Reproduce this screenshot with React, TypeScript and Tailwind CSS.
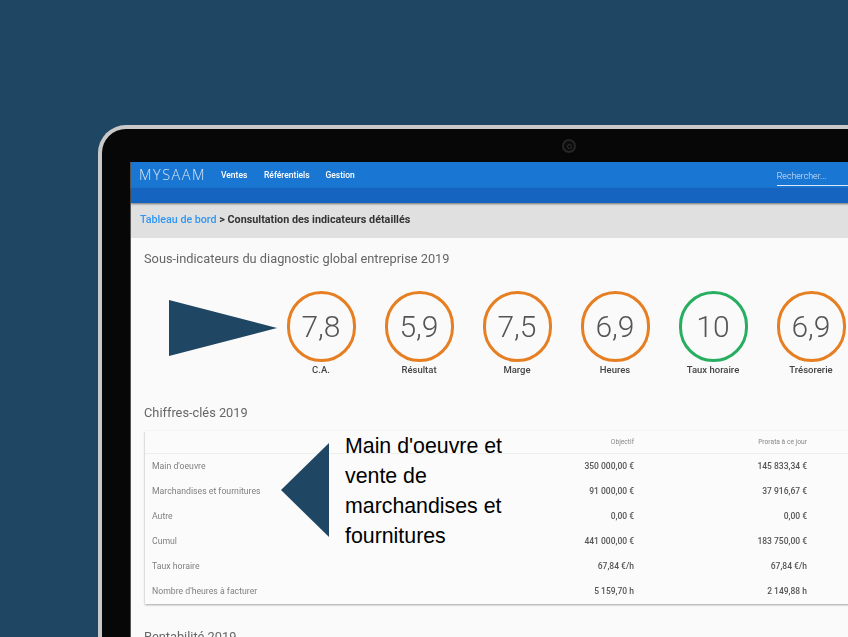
const gauges = [
  { v: "7,8", l: "C.A.", c: "#e67e22" },
  { v: "5,9", l: "Résultat", c: "#e67e22" },
  { v: "7,5", l: "Marge", c: "#e67e22" },
  { v: "6,9", l: "Heures", c: "#e67e22" },
  { v: "10", l: "Taux horaire", c: "#27ae60" },
  { v: "6,9", l: "Trésorerie", c: "#e67e22" },
];
const rows = [
  ["Main d'oeuvre", "350 000,00 €", "145 833,34 €"],
  ["Marchandises et fournitures", "91 000,00 €", "37 916,67 €"],
  ["Autre", "0,00 €", "0,00 €"],
  ["Cumul", "441 000,00 €", "183 750,00 €"],
  ["Taux horaire", "67,84 €/h", "67,84 €/h"],
  ["Nombre d'heures à facturer", "5 159,70 h", "2 149,88 h"],
];

export default function App() {
  return (
    <div className="relative w-[848px] h-[637px] overflow-hidden bg-[#1f4663] pt-[125px] pl-[98px] font-['Roboto',sans-serif]">
      <div className="w-[800px] h-[600px] rounded-tl-[28px] border-l-[4px] border-t-[4px] border-[#c9c9c9] bg-[#070707] pt-[33px] pl-[28px] relative">
        <div className="absolute left-[460px] top-[10px] w-[14px] h-[14px] rounded-full border-[2px] border-[#262626] bg-[#0c0c0c] flex items-center justify-center blur-[0.4px]">
          <div className="w-[5px] h-[5px] rounded-full border border-[#303030]" />
        </div>
        <div className="w-[800px] h-[520px] bg-[#fafafa] border-l border-[#555] blur-[0.6px]">
          <div className="h-[26px] bg-[#1976d2] flex items-center pl-[8px] text-white">
            <span className="w-[82px] text-[14.5px] font-['Open_Sans',sans-serif] font-light tracking-[1.5px] text-[#d5e6f7]">MYSAAM</span>
            <span className="text-[8.5px] font-medium w-[43px]">Ventes</span>
            <span className="text-[8.5px] font-medium w-[61.5px]">Référentiels</span>
            <span className="text-[8.5px] font-medium">Gestion</span>
            <span className="ml-[422px] w-[100px] text-[8.8px] font-light leading-[12px] pt-[3px] pb-[3px] mt-[2px] border-b border-[#dbe9f8] text-[#dbe9f8]">Rechercher...</span>
          </div>
          <div className="h-[15px] bg-[#1565c0] shadow-[0_1px_2px_rgba(0,0,0,0.5)] relative" />
          <div className="h-[35px] bg-[#e0e0e0] flex items-center pl-[9px] text-[10.8px] font-bold text-[#333]">
            <span className="text-[#2f97f3] font-medium text-[10.7px]">Tableau de bord</span>
            <span>&nbsp;&gt; Consultation des indicateurs détaillés</span>
          </div>
          <div className="pl-[13px]">
            <h2 className="text-[12.8px] leading-[20px] pt-[11px] font-normal text-[#666]">Sous-indicateurs du diagnostic global entreprise 2019</h2>
            <div className="flex pt-[22px] pl-[128px]">
              {gauges.map((g) => (
                <div key={g.l + g.v} className="w-[98px] shrink-0 flex flex-col items-center">
                  <div className="w-[69px] h-[71px] rounded-full border-[3px] flex items-center justify-center text-[30px] font-light text-[#555]" style={{ borderColor: g.c }}>
                    {g.v}
                  </div>
                  <div className="text-[9.5px] font-medium leading-[12px] mt-[2px] text-[#444]">{g.l}</div>
                </div>
              ))}
            </div>
            <h2 className="text-[12.8px] leading-[20px] mt-[27px] font-normal text-[#666]">Chiffres-clés 2019</h2>
            <div className="mt-[8px] ml-px w-[800px] bg-[#fbfbfb] shadow-[0_1px_2px_rgba(0,0,0,0.35)]">
              <div className="flex h-[23px] items-center border-b border-[#eeeeee] text-[6.7px] text-[#888]">
                <div className="w-[212px]" />
                <div className="w-[277px] text-right">Objectif</div>
                <div className="w-[173px] text-right">Prorata à ce jour</div>
              </div>
              {rows.map((r) => (
                <div key={r[0]} className="flex h-[25px] items-center text-[8.5px] text-[#555]">
                  <div className="w-[212px] pl-[7px] text-[8.7px] text-[#808080]">{r[0]}</div>
                  <div className="w-[277px] text-right font-medium">{r[1]}</div>
                  <div className="w-[173px] text-right font-medium">{r[2]}</div>
                </div>
              ))}
            </div>
            <h2 className="text-[12.8px] leading-[20px] mt-[23px] font-normal text-[#666]">Rentabilité 2019</h2>
          </div>
        </div>
      </div>

      <svg className="absolute left-[169px] top-[300px]" width="108" height="56" viewBox="0 0 108 56">
        <polygon points="0,0 108,28 0,56" fill="#1f4663" />
      </svg>
      <svg className="absolute left-[281px] top-[443px]" width="48" height="94" viewBox="0 0 48 94">
        <polygon points="48,0 0,47 48,94" fill="#1f4663" />
      </svg>
      <div className="absolute left-[345px] top-[431px] w-[170px] text-[21.33px] leading-[30px] text-black font-['Liberation_Sans',sans-serif]">
        Main d'oeuvre et vente de marchandises et fournitures
      </div>
    </div>
  );
}
